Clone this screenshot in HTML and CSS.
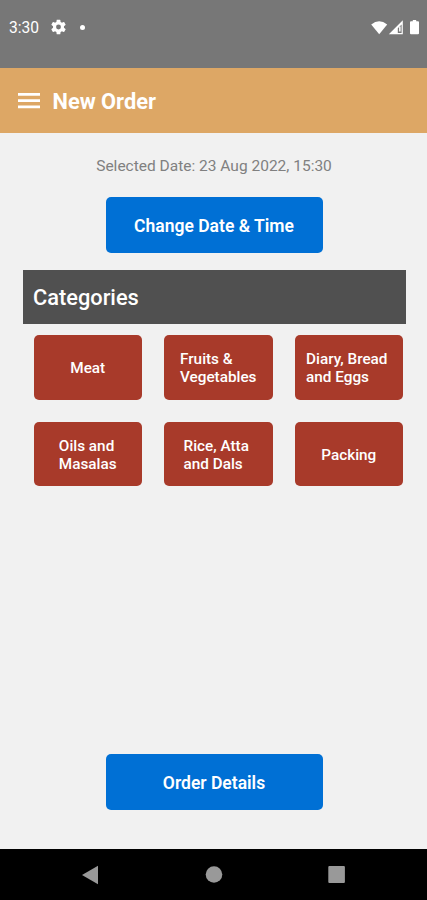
FILE: index.html
```html
<!DOCTYPE html>
<html lang="en">
<head>
    <meta charset="UTF-8">
    <meta name="viewport" content="width=device-width, initial-scale=1.0">
    <title>New Order</title>
    <link rel="stylesheet" href="styles.css">
</head>
<body>
    <!-- Status Bar -->
    <div class="status-bar">
        <span class="clock">3:30</span>
        <svg class="gear" width="17" height="16" viewBox="1.500 1.500 21 21" fill="#fff"><path d="M19.14 12.94c.04-.3.06-.61.06-.94s-.02-.64-.07-.94l2.03-1.58a.49.49 0 0 0 .12-.61l-1.92-3.32a.49.49 0 0 0-.59-.22l-2.39.96c-.5-.38-1.03-.7-1.62-.94l-.36-2.54a.48.48 0 0 0-.48-.41h-3.84c-.24 0-.43.17-.47.41l-.36 2.54c-.59.24-1.13.57-1.62.94l-2.39-.96a.48.48 0 0 0-.59.22L2.74 8.87c-.12.21-.08.47.12.61l2.03 1.58c-.05.3-.09.63-.09.94s.02.64.07.94l-2.03 1.58a.49.49 0 0 0-.12.61l1.92 3.32c.12.22.37.29.59.22l2.39-.96c.5.38 1.03.7 1.62.94l.36 2.54c.05.24.24.41.48.41h3.84c.24 0 .44-.17.47-.41l.36-2.54c.59-.24 1.13-.56 1.62-.94l2.39.96c.22.08.47 0 .59-.22l1.92-3.32a.49.49 0 0 0-.12-.61zM12 15.2A3.2 3.2 0 1 1 12 8.8a3.2 3.2 0 0 1 0 6.4z"/></svg>
        <span class="dot"></span>
        <svg class="signals" width="50" height="16" viewBox="0 0 50 16" fill="#fff">
            <path d="M1.200 4.400Q9.200-2 17.200 4.400L9.200 14.200z"/>
            <path fill-rule="evenodd" d="M32.800.2V14.200H18.800zM31.600 4.400l-3.800 3.800V13h3.800z"/>
            <path d="M29.100 6.600h1.500v5h-1.500z"/>
            <path d="M42.800 0h3.400v1.200h1.800q1 0 1 1V13.200q0 1-1 1H41q-1 0-1-1V2.200q0-1 1-1h1.800z"/>
        </svg>
    </div>

    <!-- Header -->
    <header class="header">
        <svg class="menu" width="22" height="16" viewBox="0 0 22 16" fill="#fff"><path d="M0 0h22v2.700H0zM0 6.300h22V9H0zM0 12.600h22v2.700H0z"/></svg>
        <h1>New Order</h1>
    </header>

    <!-- Main Content -->
    <main class="content">
        <p class="date">Selected Date: 23 Aug 2022, 15:30</p>
        <button class="btn">Change Date &amp; Time</button>
        <h2>Categories</h2>
        <div class="categories">
            <button class="card"><span>Meat</span></button>
            <button class="card"><span>Fruits &amp;<br>Vegetables</span></button>
            <button class="card wide"><span>Diary, Bread<br>and Eggs</span></button>
            <button class="card"><span>Oils and<br>Masalas</span></button>
            <button class="card wide"><span>Rice, Atta<br>and Dals</span></button>
            <button class="card"><span>Packing</span></button>
        </div>
        <button class="btn order">Order Details</button>
    </main>

    <!-- Navigation Bar -->
    <nav class="nav-bar">
        <svg width="18" height="20" viewBox="0 0 18 20" fill="#999"><path d="M16 .7v18.600L-.2 10z"/></svg>
        <svg width="18" height="20" viewBox="0 0 18 20" fill="#999"><circle cx="9" cy="9.500" r="8.300"/></svg>
        <svg width="18" height="20" viewBox="0 0 18 20" fill="#999"><rect x=".3" y="1" width="16.600" height="17" rx="1"/></svg>
    </nav>
</body>
</html>
```
FILE: styles.css
```css
* { box-sizing: border-box; }
body {
    font-family: Roboto, 'Liberation Sans', sans-serif;
    background-color: #f1f1f1;
    display: flex;
    flex-direction: column;
    height: 900px;
    margin: 0;
}
h1, h2, p { margin: 0; }
svg { display: block; flex: none; }

/* Status bar */
.status-bar {
    height: 67.5px;
    background: #777;
    color: #fff;
    display: flex;
    align-items: flex-start;
    padding: 20px 7px 0 9px;
}
.clock {
    width: 41px;
    font-size: 15.6px;
    line-height: 17px;
}
.gear { margin-top: -1px; }
.dot {
    width: 5px;
    height: 5px;
    margin: 4.5px 0 0 13px;
    border-radius: 50%;
    background: #fff;
}
.signals { margin-left: auto; }

/* Header */
.header {
    height: 65px;
    background: #dda765;
    color: #fff;
    display: flex;
    align-items: center;
    padding: 2px 18px 0;
    gap: 12.5px;
}
h1 {
    font-size: 21.8px;
    font-weight: bold;
    line-height: 26px;
    padding-top: 2px;
}

/* Content */
.content {
    flex: 1;
    display: flex;
    flex-direction: column;
    padding: 23.5px 21.5px 38.5px 22.5px;
}
.date {
    text-align: center;
    color: #808080;
    font-size: 15.5px;
    line-height: 20px;
}
button {
    border: none;
    color: #fff;
    font-family: inherit;
    padding: 0;
}
.btn {
    align-self: center;
    width: 217px;
    height: 56px;
    margin-top: 21px;
    padding-top: 1px;
    border-radius: 5px;
    background: #0070d5;
    font-size: 17.5px;
    font-weight: 600;
}
h2 {
    height: 54px;
    margin-top: 16.5px;
    padding: 1px 10.5px 0;
    background: #505050;
    color: #fff;
    font-size: 21.8px;
    font-weight: 500;
    line-height: 54px;
}
.categories {
    display: grid;
    grid-template-columns: repeat(3, 108.5px);
    grid-auto-rows: 64.5px;
    gap: 22px;
    padding: 11.5px 0 0 11px;
}
.card {
    border-radius: 5px;
    background: #a83a2a;
    display: flex;
    align-items: center;
    justify-content: center;
    padding-top: 2px;
    text-align: left;
    font-size: 15.3px;
    font-weight: 500;
    line-height: 18px;
}
.wide { padding-right: 4px; }
.order { margin-top: auto; }

/* Android navigation */
.nav-bar {
    height: 51.5px;
    background: #000;
    display: flex;
    justify-content: center;
    gap: 105px;
    padding-top: 16px;
}
```
